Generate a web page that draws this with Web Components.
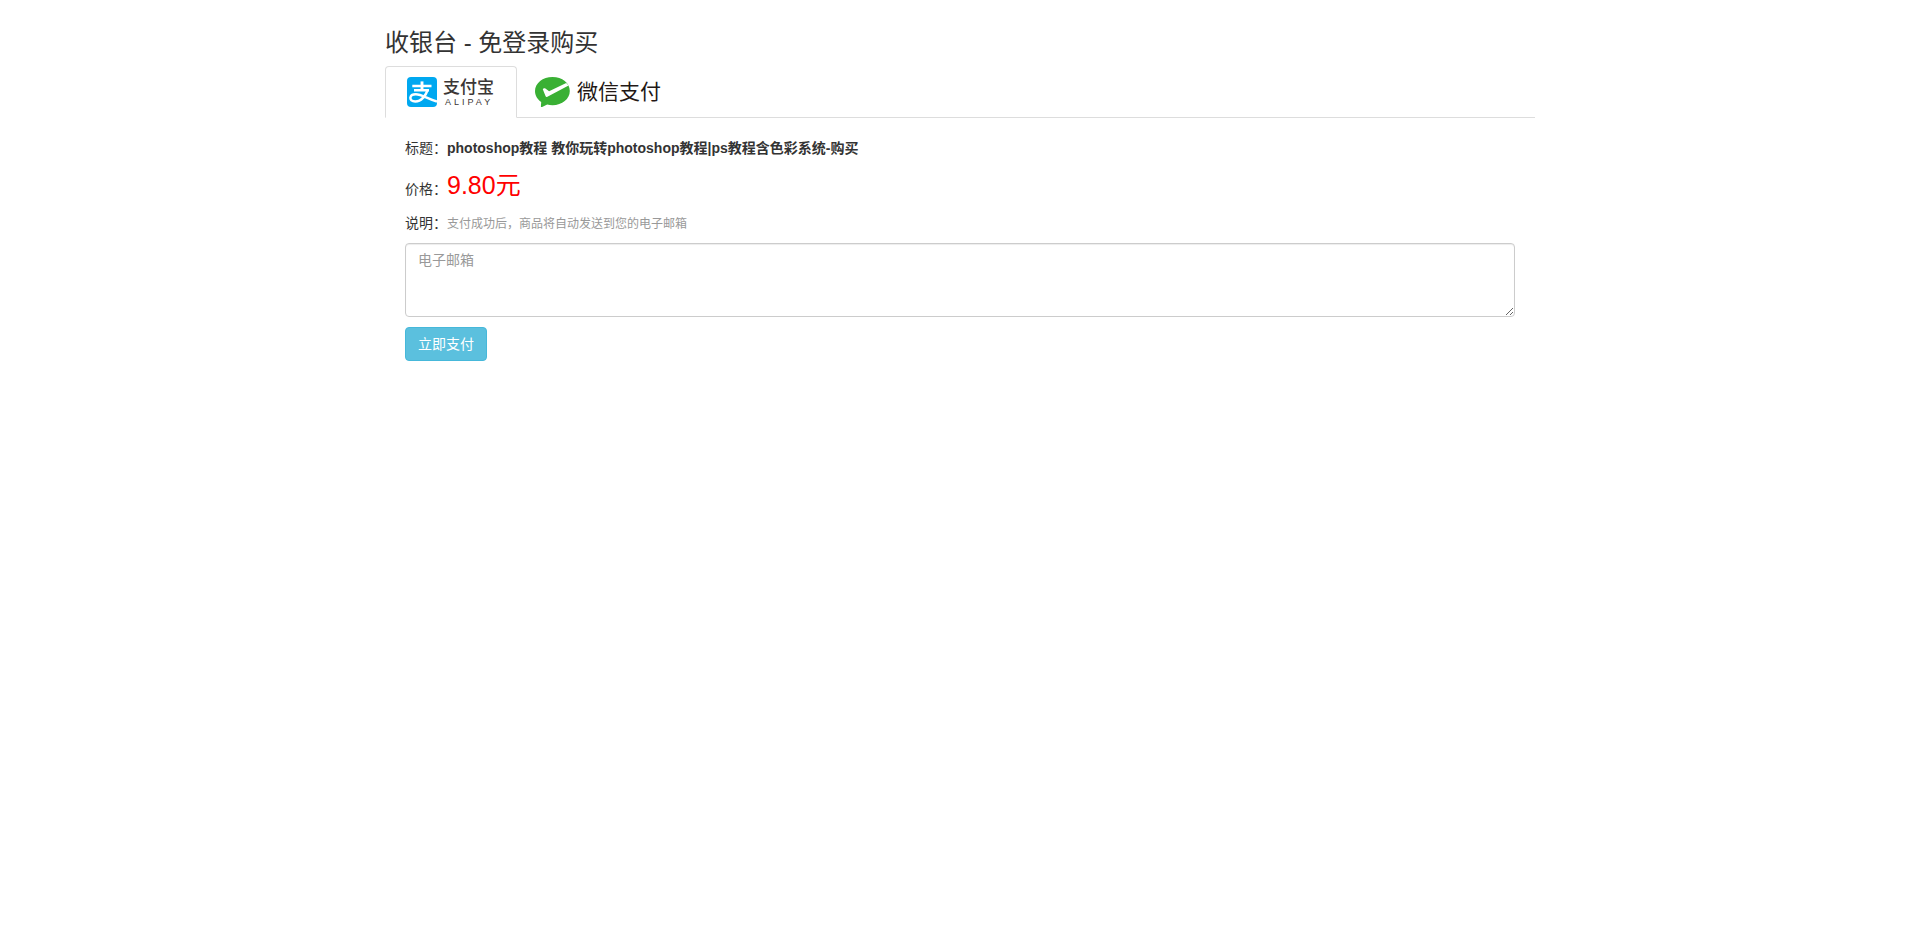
<!DOCTYPE html>
<html lang="zh-CN">
<head>
<meta charset="utf-8">
<title>收银台 - 免登录购买</title>
<style>
body { margin: 0; background: #fff; color: #333; font: 14px/20px "Liberation Sans", "Noto Sans CJK SC", sans-serif; }
</style>
</head>
<body>
<cashier-page>
  <pay-tabs slot="tabs">
    <pay-tab active><alipay-logo></alipay-logo></pay-tab>
    <pay-tab><wechat-logo></wechat-logo></pay-tab>
  </pay-tabs>
  <order-row label="标题："><b>photoshop教程 教你玩转photoshop教程|ps教程含色彩系统-购买</b></order-row>
  <order-row label="价格：" kind="price">9.80元</order-row>
  <order-row label="说明：" kind="note">支付成功后，商品将自动发送到您的电子邮箱</order-row>
  <pay-form></pay-form>
</cashier-page>
<script>
const define = (name, html) => customElements.define(name, class extends HTMLElement {
  constructor() {
    super();
    const template = document.createElement('template');
    template.innerHTML = html;
    this.attachShadow({ mode: 'open' }).append(template.content.cloneNode(true));
  }
  connectedCallback() {
    const label = this.shadowRoot.querySelector('.label');
    if (label) label.textContent = this.getAttribute('label');
  }
});

define('cashier-page', `<style>
  :host { display: block; box-sizing: border-box; max-width: 1170px; margin: 0 auto; padding: 30px 10px; }
  h1 { margin: 0 0 10px; font-size: 24px; line-height: 26px; font-weight: 400; }
  section { padding: 20px; }
</style>
<main><h1>收银台 - 免登录购买</h1><slot name="tabs"></slot><section><slot></slot></section></main>`);

define('pay-tabs', `<style>
  :host { display: block; border-bottom: 1px solid #ddd; }
  nav { display: flex; gap: 2px; margin-bottom: -1px; }
</style><nav><slot></slot></nav>`);

define('pay-tab', `<style>
  :host { display: block; }
  a { display: flex; align-items: center; box-sizing: border-box; height: 52px; padding: 0 15px; border: 1px solid transparent; border-radius: 4px 4px 0 0; color: inherit; text-decoration: none; }
  :host([active]) a { padding: 0 22px 0 21px; border-color: #ddd #ddd #fff; background: #fff; }
</style><a href="#"><slot></slot></a>`);

define('alipay-logo', `<style>
  :host { display: flex; align-items: center; gap: 6px; color: #3b3635; }
  svg { width: 30px; height: 30px; }
  .words { display: flex; flex-direction: column; width: 51px; padding-top: 2px; }
  .cn { font-size: 17px; line-height: 18px; font-weight: 500; }
  .en { display: flex; justify-content: space-between; padding: 0 1px 0 2px; font-size: 9px; line-height: 10px; letter-spacing: 3px; margin-right: -3px; }
</style>
<svg viewBox="0 0 30 30" aria-hidden="true">
  <rect width="30" height="30" rx="4" fill="#00a8f0"/>
  <path fill="none" stroke="#fff" stroke-width="2.4" d="M5.3 9H24.5M7 13.3H22"/>
  <path fill="none" stroke="#fff" stroke-width="2.9" d="M15 4.4V13"/>
  <path fill="none" stroke="#fff" stroke-width="2.5" d="M20.8 12.6C19 18 14.5 24.5 8.3 24.5C4.8 24.5 3.2 22.8 3.4 20.6C3.7 18.4 6 17.2 8.8 17.2C14 17.2 19.5 21 30 24.6"/>
</svg>
<span class="words"><span class="cn">支付宝</span><span class="en">ALIPAY</span></span>`);

define('wechat-logo', `<style>
  :host { display: flex; align-items: center; gap: 7px; color: #231815; font-size: 21px; line-height: 30px; font-weight: 400; }
  svg { width: 35px; height: 30px; }
</style>
<svg viewBox="0 0 35 30" aria-hidden="true">
  <path fill="#39b034" d="M17.5 0C7.8 0 0 6.2 0 14C0 18.5 2.4 22.4 6.2 25L5.9 29.5C6 30.2 6.6 30.3 7.1 30L12.2 27.5C13.9 28 15.6 28.2 17.5 28.2C27.2 28.2 34.8 22 34.8 14S27.2 0 17.5 0Z"/>
  <path fill="#fff" d="M7.8 12.2C8.3 11.1 9.4 10.8 10.4 11.6L14.1 14.2L31.2 6.1L33.6 8.4L12.4 19.7C11.5 20.2 10.9 19.9 10.5 19Z"/>
</svg><span>微信支付</span>`);

define('order-row', `<style>
  :host { display: block; margin-bottom: 10px; }
  div { display: flex; align-items: baseline; height: 20px; }
  .value { line-height: inherit; }
  :host([kind="price"]) div { height: 35px; line-height: 35px; }
  :host([kind="price"]) .value { color: #f00; font-size: 25px; }
  :host([kind="note"]) .value { color: #999; font-size: 12px; }
</style><div><span class="label"></span><span class="value"><slot></slot></span></div>`);

define('pay-form', `<style>
  :host { display: block; }
  textarea { display: block; box-sizing: border-box; width: 100%; height: 74px; margin: 0 0 10px; padding: 6px 12px; border: 1px solid #ccc; border-radius: 4px; background: #fff; box-shadow: inset 0 1px 1px rgba(0,0,0,.075); color: #555; font: inherit; resize: vertical; }
  textarea::placeholder { color: #999; }
  button { height: 34px; padding: 0 12px; border: 1px solid #46b8da; border-radius: 4px; background: #5bc0de; color: #fff; font: inherit; cursor: pointer; }
</style>
<form><textarea rows="3" placeholder="电子邮箱" aria-label="电子邮箱"></textarea><button type="button">立即支付</button></form>`);
</script>
</body>
</html>
